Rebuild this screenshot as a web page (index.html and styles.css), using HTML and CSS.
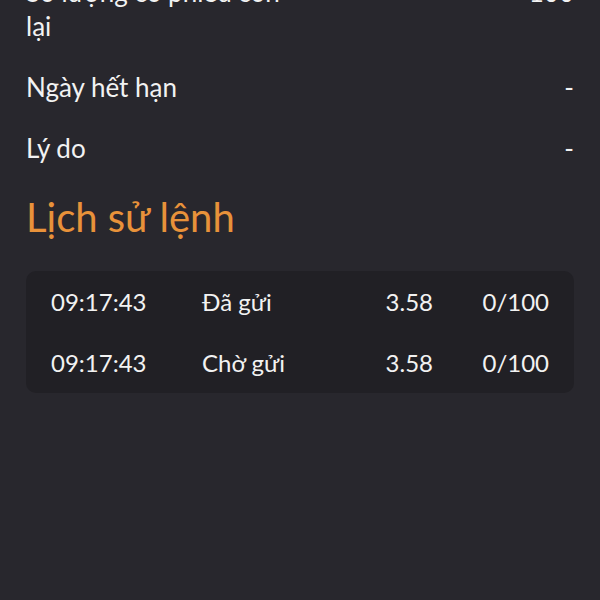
FILE: index.html
```html
<!DOCTYPE html>
<html lang="vi">
<head>
  <meta charset="UTF-8" />
  <meta name="viewport" content="width=device-width, initial-scale=1.0"/>
  <title>Chi tiết lệnh</title>
  <link rel="stylesheet" href="styles.css">
</head>
<body>

  <div class="order-detail">
    <div class="info-row">
      <span class="info-label wrap">Số lượng cổ phiếu còn lại</span>
      <span class="info-value">100</span>
    </div>
    <div class="info-row">
      <span class="info-label">Ngày hết hạn</span>
      <span class="info-value">-</span>
    </div>
    <div class="info-row">
      <span class="info-label">Lý do</span>
      <span class="info-value">-</span>
    </div>

    <h2 class="section-title">Lịch sử lệnh</h2>

    <div class="history-card">
      <div class="history-row">
        <span class="h-time">09:17:43</span>
        <span class="h-status">Đã gửi</span>
        <span class="h-price">3.58</span>
        <span class="h-qty">0/100</span>
      </div>
      <div class="history-row">
        <span class="h-time">09:17:43</span>
        <span class="h-status">Chờ gửi</span>
        <span class="h-price">3.58</span>
        <span class="h-qty">0/100</span>
      </div>
    </div>
  </div>

</body>
</html>
```

FILE: styles.css
```css
* {
  box-sizing: border-box;
}

body {
  margin: 0;
  padding: 0;
  font-family: 'Lato', 'Noto Sans', sans-serif;
  background-color: #28272d;
  color: #f2f2f2;
  height: 600px;
  overflow: hidden;
}

.order-detail {
  padding: 0 26px;
  margin-top: -25px;
}

.info-row {
  display: flex;
  justify-content: space-between;
  align-items: flex-start;
  font-size: 26px;
  line-height: 34px;
  padding: 0 0 27px;
}

.info-label.wrap {
  max-width: 260px;
}

.info-value {
  text-align: right;
}

.section-title {
  margin: 0;
  color: #e8923a;
  font-weight: normal;
  font-size: 40px;
  line-height: 44px;
  margin-top: 3px;
  margin-bottom: 32px;
}

.history-card {
  background-color: #212025;
  border-radius: 10px;
  padding: 0 25px;
}

.history-row {
  display: grid;
  grid-template-columns: 151px 1fr 90px 116px;
  align-items: center;
  height: 61px;
  font-size: 24px;
}

.h-price,
.h-qty {
  text-align: right;
}
```
